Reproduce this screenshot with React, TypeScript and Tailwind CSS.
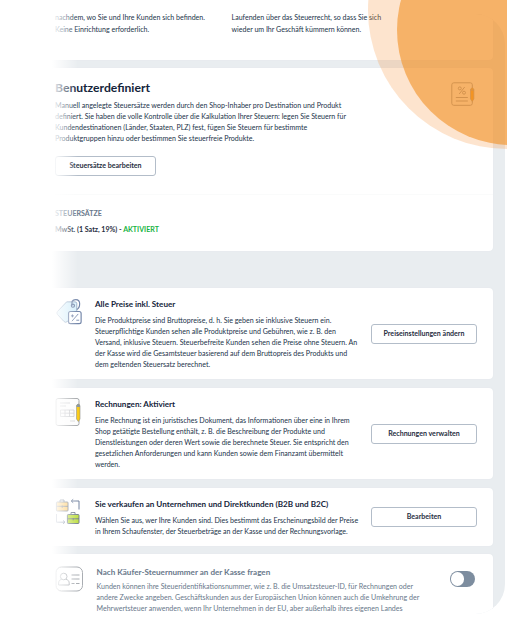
import type { ReactNode } from "react";

function Lines({ items, className = "" }: { items: string[]; className?: string }) {
  return (
    <div className={`whitespace-nowrap text-[7.07px] leading-[11.15px] ${className}`}>
      {items.map((t) => (
        <div key={t}>{t}</div>
      ))}
    </div>
  );
}

function Button({ children, className = "" }: { children: ReactNode; className?: string }) {
  return (
    <button
      className={`flex h-5 shrink-0 items-center justify-center whitespace-nowrap rounded-[3px] border border-[#b3bdc9] bg-white pt-px text-[7.05px] font-bold text-[#1f2e41] ${className}`}
    >
      {children}
    </button>
  );
}

function Card({ children, className = "" }: { children?: ReactNode; className?: string }) {
  return (
    <section className={`w-[443.5px] shrink-0 rounded-[4px] bg-white shadow-[0_0_1px_#d9dfe4] ${className}`}>
      {children}
    </section>
  );
}

function Setting({
  icon,
  title,
  lines,
  action,
  className = "",
}: {
  icon: ReactNode;
  title: string;
  lines: string[];
  action: string;
  className?: string;
}) {
  return (
    <Card className={`flex items-center pr-[15.5px] ${className}`}>
      <div className="w-[46px] shrink-0 self-start pl-[6px] pt-[9px]">{icon}</div>
      <div className="flex-1 self-start pt-[10px]">
        <h3 className="whitespace-nowrap text-[8.1px] font-bold leading-[12px] text-[#14243a]">{title}</h3>
        <Lines items={lines} className="mt-[4.5px] text-[#22334a]" />
      </div>
      <Button className="w-[106px]">{action}</Button>
    </Card>
  );
}

function TagIcon() {
  return (
    <svg className="mt-px" width="30" height="29" viewBox="0 0 30 30" fill="none" stroke="#7285a8" strokeWidth="1.2">
      <path d="M2 14 11.5 4h8.7q1.8 0 1.8 1.8v9L12 24.5Q10 26 8.5 24L2 17q-1.4-1.5 0-3Z" fill="#d8f0fb" stroke="#8fa5bf" strokeWidth=".9" />
      <circle cx="18" cy="8" r="1.6" />
      <path d="M17 8V5c0-4 8-5 8 1 0 4-1 5-3 6" />
      <rect x="13.5" y="14" width="13" height="12.5" rx="2" fill="white" />
      <path d="m17 24 6.5-7.5M16 18.5h3M17.5 17v3M21.5 23h3" strokeWidth=".9" />
    </svg>
  );
}

function InvoiceIcon() {
  return (
    <svg width="30" height="32" viewBox="0 0 30 32" fill="none">
      <rect x="1" y="1.5" width="23" height="27" rx="2" fill="#fcfcfc" stroke="#a5a8ab" strokeWidth="1" />
      <path d="M5 6h10M5 9h6M15 24h5" stroke="#d3d4d6" />
      <path d="M5.5 13h13.5v6.5H5.5zM5.5 16.2H19M10 13v6.5M14.5 13v6.5" stroke="#c6c8cb" strokeWidth=".8" />
      <path d="M21.5 8.5q2-3 3.5 0V22l-1.7 2.5L21.5 22Z" fill="#facb18" stroke="#8d8d86" strokeWidth=".6" />
      <path d="M21.6 10V8q1.7-2.2 3.3 0v2Z" fill="#8996a2" />
    </svg>
  );
}

function Case({ x, y, fill }: { x: number; y: number; fill: string }) {
  return (
    <g transform={`translate(${x} ${y})`} stroke="#6f7b8d" strokeWidth=".9">
      <path d="M4 2.5V.5h4v2" />
      <rect x=".4" y="2.5" width="11.6" height="9" rx=".8" fill={fill} />
      <path d="M.4 6.8H12M6.2 6v2.3" />
    </g>
  );
}

function CasesIcon() {
  return (
    <svg className="mt-px" width="30" height="30" viewBox="0 0 30 30" fill="none">
      <Case x={1} y={1.5} fill="#ffcf73" />
      <Case x={12} y={14} fill="#c1e04c" />
      <path d="m18.2 1.3-2 1.7 2 1.7M16.5 3H24v8.5" stroke="#7484a1" strokeWidth="1" />
      <path d="m8 22.5 2 1.7-2 1.7M9.7 24.2H1.5V16" stroke="#8f9bb0" strokeWidth="1" />
    </svg>
  );
}

function IdIcon() {
  return (
    <svg width="30" height="28" viewBox="0 0 30 28" fill="none" stroke="#a9adb2" strokeWidth="1">
      <rect x="1" y="1" width="26.5" height="24" rx="5.5" />
      <circle cx="8.7" cy="10.5" r="3.3" />
      <path d="M6.6 13.3c-3.2 1-3 2.8-3 5.7h10.6c0-3 .1-4.8-3.3-5.7" />
      <path d="M16.5 9h8M16.5 13h8M16.5 17.5h3M21 17.5h3.5" />
    </svg>
  );
}

function TaxIcon() {
  return (
    <svg className="shrink-0" width="24" height="25" viewBox="0 0 24 25" fill="none" stroke="#8b95a3" strokeWidth="1">
      <rect x=".8" y=".8" width="20.5" height="22.5" rx="2" />
      <circle cx="8.8" cy="6.4" r="1.5" />
      <circle cx="13" cy="10.7" r="1.5" />
      <path d="m8.2 12 5.5-7M4.8 15.5h12M4.8 19h12" />
      <path d="M19.5 7.5q1.7-3.5 3.4 0V17l-1.7 2.5L19.5 17Z" fill="#f39a15" strokeWidth=".7" />
      <path d="M19.5 8h3.4" />
    </svg>
  );
}

export default function App() {
  return (
    <main className="relative h-[630px] w-[507px] overflow-hidden bg-white pt-[14px] font-[Lato,sans-serif]">
      <div className="ml-[49px] flex h-[600px] w-[456px] flex-col overflow-hidden rounded-r-[30px] bg-[#e9edf0]">
        <Card className="flex h-[46px] rounded-t-none pl-[6px] text-[#22334a]">
          <Lines
            items={["nachdem, wo Sie und Ihre Kunden sich befinden.", "Keine Einrichtung erforderlich."]}
            className="-mt-[2px] w-[176.5px] !leading-[12px]"
          />
          <Lines
            items={["Laufenden über das Steuerrecht, so dass Sie sich", "wieder um Ihr Geschäft kümmern können."]}
            className="-mt-[2px] !leading-[12px]"
          />
        </Card>
        <Card className="mt-[8px] h-[183px] pl-[6px] pt-[12px]">
          <div className="flex h-[64px] justify-between pr-[17.5px]">
            <div>
              <h2 className="whitespace-nowrap text-[12.15px] font-bold leading-[16px] text-[#14243a]">Benutzerdefiniert</h2>
              <Lines
                className="mt-[3.5px] text-[#22334a]"
                items={[
                  "Manuell angelegte Steuersätze werden durch den Shop-Inhaber pro Destination und Produkt",
                  "definiert. Sie haben die volle Kontrolle über die Kalkulation Ihrer Steuern: legen Sie Steuern für",
                  "Kundendestinationen (Länder, Staaten, PLZ) fest, fügen Sie Steuern für bestimmte",
                  "Produktgruppen hinzu oder bestimmen Sie steuerfreie Produkte.",
                ]}
              />
            </div>
            <div className="pt-[2px]"><TaxIcon /></div>
          </div>
          <Button className="mt-[12px] w-[101px]">Steuersätze bearbeiten</Button>
          <div className="mt-[18px] border-t border-[#fafbfb] pt-[13px] text-[7.07px] font-bold leading-[12px]">
            <div className="text-[#68778a]">STEUERSÄTZE</div>
            <div className="mt-[4px] text-[#1f2e41]">
              MwSt. (1 Satz, 19%) - <span className="text-[#17b342]">AKTIVIERT</span>
            </div>
          </div>
        </Card>
        <Setting
          className="mt-[37px] h-[91px]"
          icon={<TagIcon />}
          title="Alle Preise inkl. Steuer"
          action="Preiseinstellungen ändern"
          lines={[
            "Die Produktpreise sind Bruttopreise, d. h. Sie geben sie inklusive Steuern ein.",
            "Steuerpflichtige Kunden sehen alle Produktpreise und Gebühren, wie z. B. den",
            "Versand, inklusive Steuern. Steuerbefreite Kunden sehen die Preise ohne Steuern. An",
            "der Kasse wird die Gesamtsteuer basierend auf dem Bruttopreis des Produkts und",
            "dem geltenden Steuersatz berechnet.",
          ]}
        />
        <Setting
          className="mt-[9px] h-[91px]"
          icon={<InvoiceIcon />}
          title="Rechnungen: Aktiviert"
          action="Rechnungen verwalten"
          lines={[
            "Eine Rechnung ist ein juristisches Dokument, das Informationen über eine in Ihrem",
            "Shop getätigte Bestellung enthält, z. B. die Beschreibung der Produkte und",
            "Dienstleistungen oder deren Wert sowie die berechnete Steuer. Sie entspricht den",
            "gesetzlichen Anforderungen und kann Kunden sowie dem Finanzamt übermittelt",
            "werden.",
          ]}
        />
        <Setting
          className="mt-[9px] h-[58px]"
          icon={<CasesIcon />}
          title="Sie verkaufen an Unternehmen und Direktkunden (B2B und B2C)"
          action="Bearbeiten"
          lines={[
            "Wählen Sie aus, wer Ihre Kunden sind. Dies bestimmt das Erscheinungsbild der Preise",
            "in Ihrem Schaufenster, der Steuerbeträge an der Kasse und der Rechnungsvorlage.",
          ]}
        />
        <Card className="mt-[8px] flex h-[80px] pl-[6px] pr-[17.5px] text-[#68778a]">
          <div className="w-[41.5px] shrink-0 pt-[12px]"><IdIcon /></div>
          <div className="flex-1 pt-[11.5px]">
            <h3 className="whitespace-nowrap text-[8.1px] font-bold leading-[12px]">Nach Käufer-Steuernummer an der Kasse fragen</h3>
            <Lines
              className="mt-[3.5px]"
              items={[
                "Kunden können ihre Steueridentifikationsnummer, wie z. B. die Umsatzsteuer-ID, für Rechnungen oder",
                "andere Zwecke angeben. Geschäftskunden aus der Europäischen Union können auch die Umkehrung der",
                "Mehrwertsteuer anwenden, wenn Ihr Unternehmen in der EU, aber außerhalb ihres eigenen Landes",
              ]}
            />
          </div>
          <div className="mt-[17px] h-[15.5px] w-[25.5px] rounded-full bg-[#7d8d9f] p-[1px]">
            <div className="size-[13.5px] rounded-full bg-white" />
          </div>
        </Card>
      </div>
      <div className="absolute inset-y-0 left-[49px] w-[29px] bg-linear-to-r from-white from-10% to-white/0" />
      <div className="absolute -top-[129px] left-[368px] size-[278px] rounded-full bg-[#f7943c]/25" />
      <div className="absolute -top-[85px] left-[397px] size-[230px] rounded-full bg-[#f19124]/60" />
    </main>
  );
}
